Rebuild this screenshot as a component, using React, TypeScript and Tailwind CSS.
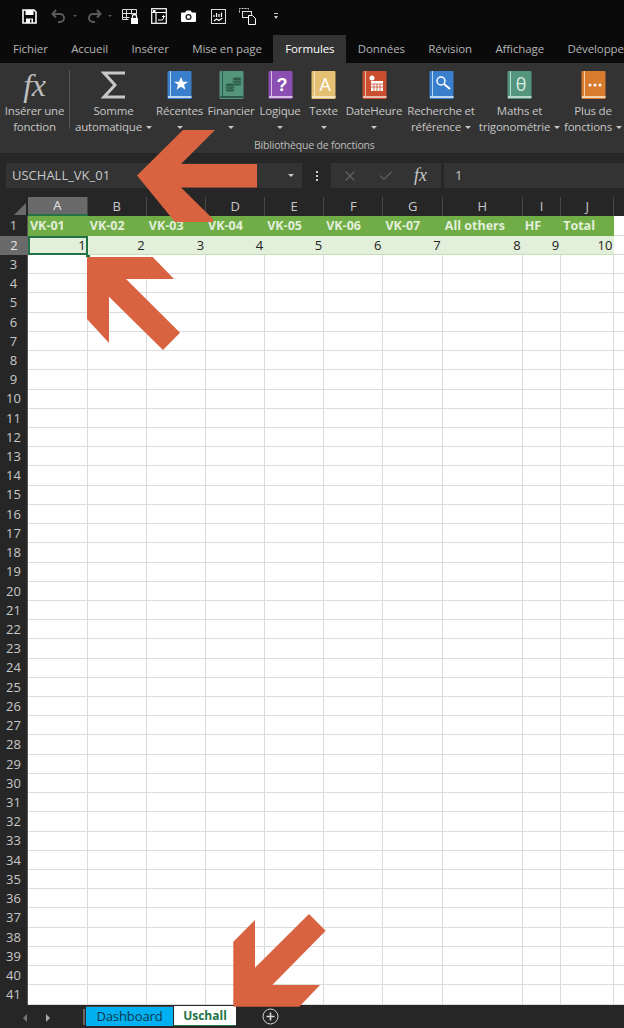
import { Check, X } from 'lucide-react'

const columns = [
    { name: 'A', width: 59.8 },
    { name: 'B', width: 59 },
    { name: 'C', width: 59.3 },
    { name: 'D', width: 59.1 },
    { name: 'E', width: 59 },
    { name: 'F', width: 59.3 },
    { name: 'G', width: 59.3 },
    { name: 'H', width: 80 },
    { name: 'I', width: 38.4 },
    { name: 'J', width: 53.3 },
    { name: '', width: 40 },
]

const headers = ['VK-01', 'VK-02', 'VK-03', 'VK-04', 'VK-05', 'VK-06', 'VK-07', 'All others', 'HF', 'Total']
const tabs = ['Fichier', 'Accueil', 'Insérer', 'Mise en page', 'Formules', 'Données', 'Révision', 'Affichage', 'Développeur']
const emptyRows = Array.from({ length: 39 }, (_, i) => i + 3)

function Caret() {
    return <span className="inline-block h-0 w-0 border-x-[3px] border-t-[3px] border-x-transparent border-t-[#c8c8c8] align-middle" />
}

function Book({ color, spine, children }: { color: string; spine: string; children: React.ReactNode }) {
    return (
        <svg width="25" height="28" viewBox="0 0 25 28">
            <rect x="0.5" y="0" width="24" height="28" rx="1" fill={color} />
            <rect x="3" y="0" width="1" height="25" fill={spine} />
            <rect x="1" y="25" width="23.5" height="2" fill={spine} />
            {children}
        </svg>
    )
}

function RibbonButton({ x, label, sub, children }: { x: string; label: string; sub?: string; children: React.ReactNode }) {
    return (
        <div className={`flex shrink-0 flex-col items-center ${x}`}>
            <div className="flex h-[28px] items-center justify-center">{children}</div>
            <div className="mt-[4px] whitespace-nowrap leading-[16px]">{label}</div>
            <div className="flex h-[16px] items-center gap-[4px] whitespace-nowrap leading-[16px]">
                {sub}
                <Caret />
            </div>
        </div>
    )
}

function Coins({ cx, cy }: { cx: number; cy: number }) {
    return (
        <g fill="#2e5c4b" stroke="#54957d" strokeWidth="0.6">
            <ellipse cx={cx} cy={cy + 5} rx="4.5" ry="2" />
            <ellipse cx={cx} cy={cy + 2.5} rx="4.5" ry="2" />
            <ellipse cx={cx} cy={cy} rx="4.5" ry="2" />
        </g>
    )
}

function QuickIcons() {
    return (
        <div className="flex h-[35px] items-center pb-[3px] text-white">
            <svg className="ml-[22px]" width="15" height="15" viewBox="0 0 15 15">
                <path d="M1 1h11l2 2v11H1z" fill="none" stroke="#fff" strokeWidth="1.6" />
                <rect x="3.5" y="1" width="8" height="5" fill="#fff" />
                <rect x="4" y="9.5" width="7" height="4.5" fill="#fff" />
                <rect x="8" y="10.5" width="1.5" height="3" fill="#111" />
            </svg>
            <svg className="ml-[14px]" width="16" height="14" viewBox="0 0 16 14" fill="none" stroke="#5a5a5a" strokeWidth="2">
                <path d="M5 1 1.5 5 5 8.5M2 5h7a4 4 0 0 1 0 8H7" />
            </svg>
            <span className="ml-[6px] h-0 w-0 border-x-[2px] border-t-[2px] border-x-transparent border-t-[#5a5a5a]" />
            <svg className="ml-[9px]" width="16" height="14" viewBox="0 0 16 14" fill="none" stroke="#5a5a5a" strokeWidth="2">
                <path d="M11 1l3.5 4L11 8.5M14 5H7a4 4 0 0 0 0 8h2" />
            </svg>
            <span className="ml-[6px] h-0 w-0 border-x-[2px] border-t-[2px] border-x-transparent border-t-[#5a5a5a]" />
            <svg className="ml-[10px]" width="17" height="17" viewBox="0 0 17 17" fill="none" stroke="#ddd">
                <path d="M.5 1.5h14M.5 5.5h14M.5 9.5h7M.5 1.5v10h6M4.5 1.500v10M9.500 1.500v5M14.500 1.500v5" />
                <rect x="9" y="10" width="7" height="6" fill="#fff" stroke="none" />
                <path d="M10.500 10V8.500a2 2 0 0 1 4 0V10" stroke="#fff" strokeWidth="1.3" />
            </svg>
            <svg className="ml-[12px]" width="16" height="16" viewBox="0 0 16 16" fill="none" stroke="#fff">
                <rect x=".7" y=".7" width="14.6" height="14.6" strokeWidth="1.2" />
                <path d="M.7 4.500h14.600M5 4.500v10.800" strokeWidth="1.2" />
                <path d="M7 12h3.500a2 2 0 0 0 2-2V8M11 9l1.500-1.500L14 9" />
                <rect x="2" y="2" width="2.5" height="2" fill="#fff" stroke="none" />
            </svg>
            <svg className="ml-[14px]" width="15" height="12" viewBox="0 0 15 12">
                <path d="M1 2.500h3L5.500.5h4L11 2.500h3a1 1 0 0 1 1 1V11a1 1 0 0 1-1 1H1a1 1 0 0 1-1-1V3.500a1 1 0 0 1 1-1z" fill="#fff" />
                <circle cx="7.5" cy="7" r="3" fill="#111" />
                <circle cx="7.5" cy="7" r="1.8" fill="#fff" />
            </svg>
            <svg className="ml-[15px]" width="15" height="15" viewBox="0 0 15 15" fill="none" stroke="#ddd">
                <rect x=".5" y=".5" width="14" height="14" />
                <path d="M3 6v2M5.500 4v4M8 5v3M10.500 3.500V8M3 12l2.500-2 2.500 1.500 3.500-2.500" stroke="#fff" strokeWidth="1.2" />
            </svg>
            <svg className="ml-[13px]" width="18" height="17" viewBox="0 0 18 17" fill="none" stroke="#ddd">
                <path d="M.5 4.500v-4h9v2" strokeDasharray="2 1" />
                <rect x="3.5" y="3.5" width="9" height="6" fill="#111" />
                <path d="M9.500 7.500h4l3 3v6h-7z" fill="#111" stroke="#fff" />
            </svg>
            <div className="ml-[17px] flex flex-col items-center gap-[2px]">
                <span className="h-px w-[4px] bg-[#ccc]" />
                <span className="h-0 w-0 border-x-[2.5px] border-t-[3px] border-x-transparent border-t-[#ccc]" />
            </div>
        </div>
    )
}

function Ribbon() {
    return (
        <div className="relative h-[90px] overflow-hidden bg-[#333333] pt-[8px] text-[11.5px] tracking-[-0.2px] text-[#c6c6c6]">
            <div className="flex items-start">
                <div className="flex w-[69px] shrink-0 flex-col items-center">
                    <div className="flex h-[28px] items-center font-['Liberation_Serif',serif] text-[32px] italic leading-none text-[#bdbdbd]">fx</div>
                    <div className="mt-[4px] whitespace-nowrap text-center leading-[16px]">
                        Insérer une
                        <br />
                        fonction
                    </div>
                </div>
                <div className="mt-[-1px] h-[59px] w-px shrink-0 bg-[#555555]" />
                <RibbonButton x="ml-[5px] w-[77px]" label="Somme" sub="automatique">
                    <svg width="25" height="28" viewBox="0 0 25 28" fill="none" stroke="#c8c8c8" strokeWidth="3">
                        <path d="M24 2H3l11 12L3 26h21" />
                    </svg>
                </RibbonButton>
                <RibbonButton x="ml-[2.5px] w-[50px]" label="Récentes">
                    <Book color="#3a7fcc" spine="#bcd6ef">
                        <path d="M14 6l2 4.700h5l-4 3.100 1.500 5-4.500-3-4.500 3 1.500-5-4-3.100h5z" fill="#fff" />
                    </Book>
                </RibbonButton>
                <RibbonButton x="ml-[2px] w-[49px]" label="Financier">
                    <Book color="#54957d" spine="#2e5c4b">
                        <Coins cx={18} cy={8} />
                        <Coins cx={11} cy={14} />
                    </Book>
                </RibbonButton>
                <RibbonButton x="ml-[2.5px] w-[44px]" label="Logique">
                    <Book color="#8a4fb0" spine="#d6c0e4">
                        <text x="14" y="20" textAnchor="middle" fontSize="18" fontWeight="700" fill="#fff" fontFamily="Liberation Sans, sans-serif">?</text>
                    </Book>
                </RibbonButton>
                <RibbonButton x="ml-[3px] w-[37px]" label="Texte">
                    <Book color="#e5bf72" spine="#f3e2bd">
                        <text x="14" y="20" textAnchor="middle" fontSize="18" fill="#fff" fontFamily="Open Sans, sans-serif">A</text>
                    </Book>
                </RibbonButton>
                <RibbonButton x="ml-[3px] w-[58px]" label="DateHeure">
                    <Book color="#c94f30" spine="#eabcae">
                        <rect x="9" y="10" width="12" height="10" fill="#fff" />
                        <path d="M9 13h12M9 16h12M12 13v7M15 13v7M18 13v7" stroke="#c94f30" strokeWidth=".8" />
                        <circle cx="10" cy="7" r="2.5" fill="#fff" />
                    </Book>
                </RibbonButton>
                <RibbonButton x="ml-[4px] w-[68px]" label="Recherche et" sub="référence">
                    <Book color="#3a7fcc" spine="#bcd6ef">
                        <circle cx="12" cy="10" r="4" fill="none" stroke="#fff" strokeWidth="1.5" />
                        <path d="M15 13l6 5" stroke="#fff" strokeWidth="2" />
                    </Book>
                </RibbonButton>
                <RibbonButton x="ml-[6.5px] w-[76px]" label="Maths et" sub="trigonométrie">
                    <Book color="#54957d" spine="#b8d6ca">
                        <text x="14" y="20" textAnchor="middle" fontSize="18" fill="#d8ebe3" fontFamily="Open Sans, sans-serif">θ</text>
                    </Book>
                </RibbonButton>
                <RibbonButton x="ml-[5.5px] w-[60px]" label="Plus de" sub="fonctions">
                    <Book color="#d97b2e" spine="#f2cfae">
                        <circle cx="9" cy="14" r="1.5" fill="#fff" />
                        <circle cx="14" cy="14" r="1.5" fill="#fff" />
                        <circle cx="19" cy="14" r="1.5" fill="#fff" />
                    </Book>
                </RibbonButton>
            </div>
            <div className="absolute left-[254px] top-[75px] text-[10.5px] leading-[14px] text-[#bdbdbd]">Bibliothèque de fonctions</div>
        </div>
    )
}

function FormulaBar() {
    return (
        <div className="flex h-[44px] items-start bg-[#262626] pt-[10px]">
            <div className="ml-[6px] flex h-[25px] w-[296px] items-center justify-between bg-[#333333] pl-[6px] pr-[8px] text-[13px] text-[#c8c8c8]">
                USCHALL_VK_01
                <Caret />
            </div>
            <div className="flex h-[25px] w-[29px] flex-col items-center justify-center gap-[2px]">
                <span className="h-[2px] w-[2px] bg-[#ccc]" />
                <span className="h-[2px] w-[2px] bg-[#ccc]" />
                <span className="h-[2px] w-[2px] bg-[#ccc]" />
            </div>
            <div className="flex h-[25px] w-[110px] items-center bg-[#333333] pl-[11px] text-[#5e5e5e]">
                <X size={16} />
                <Check size={16} className="ml-[20px]" />
                <span className="ml-[20px] font-['Liberation_Serif',serif] text-[18px] italic text-[#c8c8c8]">fx</span>
            </div>
            <div className="ml-[3px] flex h-[25px] flex-1 items-center bg-[#333333] pl-[11px] text-[13px] text-[#c8c8c8]">1</div>
        </div>
    )
}

function Sheet() {
    return (
        <div className="flex flex-col text-[#c8c8c8]">
            <div className="flex h-[19px] bg-[#262626]">
                <div className="relative w-[28px] shrink-0">
                    <span className="absolute bottom-[1px] right-[2px] h-0 w-0 border-b-[12px] border-l-[12px] border-b-[#6a6a6a] border-l-transparent" />
                </div>
                {columns.map((col, i) => (
                    <div
                        key={col.name}
                        style={{ width: col.width }}
                        className={`flex shrink-0 items-center justify-center border-r border-[#474747] text-[13px] ${i === 0 ? 'border-b-2 border-b-[#217346] bg-[#6a6a6a] text-[#e6e6e6]' : ''}`}
                    >
                        {col.name}
                    </div>
                ))}
            </div>
            <div className="flex h-[19.5px]">
                <div className="flex w-[28px] shrink-0 items-center justify-center border-r border-[#555] bg-[#262626] text-[13px]">1</div>
                {headers.map((h, i) => (
                    <div
                        key={h}
                        style={{ width: columns[i].width }}
                        className="shrink-0 whitespace-nowrap bg-[#70ad47] pl-[2px] text-[12.5px] font-bold leading-[20px] text-[#e2efda]"
                    >
                        {h}
                    </div>
                ))}
                <div className="flex-1 border-b border-[#d9d9d9] bg-white" />
            </div>
            <div className="flex h-[19.5px]">
                <div className="flex w-[28px] shrink-0 items-center justify-center bg-[#6a6a6a] text-[13px] text-[#e6e6e6]">2</div>
                {headers.map((h, i) => (
                    <div
                        key={h}
                        style={{ width: columns[i].width }}
                        className={`relative shrink-0 bg-[#e2efda] pr-[2px] text-right text-[13px] leading-[19px] text-[#222] ${i === 0 ? 'outline-2 -outline-offset-2 outline-[#217346]' : 'border-b border-[#c6dfb8]'}`}
                    >
                        {i + 1}
                        {i === 0 && <span className="absolute -bottom-[2px] -right-[2px] h-[4px] w-[4px] bg-[#217346]" />}
                    </div>
                ))}
                <div className="flex-1 border-b border-[#d9d9d9] bg-white" />
            </div>
            {emptyRows.map((row) => (
                <div key={row} className="flex h-[19.22px]">
                    <div className="flex w-[28px] shrink-0 items-center justify-center border-r border-[#555] bg-[#262626] text-[13px]">{row}</div>
                    {columns.map((col) => (
                        <div key={col.name} style={{ width: col.width }} className="shrink-0 border-b border-r border-[#dcdcdc] bg-white" />
                    ))}
                </div>
            ))}
        </div>
    )
}

function SheetTabs() {
    return (
        <div className="flex h-[22px] items-start bg-[#262626]">
            <span className="ml-[23px] mt-[8px] h-0 w-0 border-y-[4px] border-r-[4px] border-y-transparent border-r-[#777]" />
            <span className="ml-[19px] mt-[8px] h-0 w-0 border-y-[4px] border-l-[4px] border-y-transparent border-l-[#aaa]" />
            <span className="ml-[33px] mt-[3px] h-[16px] w-[2px] bg-[#666]" />
            <div className="ml-[1px] flex h-[20px] w-[87px] items-center justify-center border-t border-[#444] bg-[#00b0f0] text-[13px] tracking-[-0.1px] text-[#10364a]">Dashboard</div>
            <div className="ml-[1px] flex h-[20px] w-[62px] items-center justify-center border-b border-[#217346] bg-white text-[12px] font-bold text-[#217346]">Uschall</div>
            <svg className="ml-[26px] mt-[2px]" width="17" height="17" viewBox="0 0 17 17" fill="none" stroke="#d8d8d8">
                <circle cx="8.5" cy="8.5" r="7.5" />
                <path d="M8.500 4.500v8M4.500 8.500h8" strokeWidth="1.6" />
            </svg>
        </div>
    )
}

export default function App() {
    return (
        <div className="relative h-[1028px] w-[624px] overflow-hidden bg-[#262626] font-['Open_Sans',sans-serif]">
            <div className="bg-[#0a0a0a]">
                <QuickIcons />
                <div className="flex h-[28px] items-stretch pl-[1.3px] text-[11.5px] tracking-[-0.1px] text-[#b4b4b4]">
                    {tabs.map((tab, i) => (
                        <div
                            key={tab}
                            className={`flex shrink-0 items-center whitespace-nowrap px-[11.7px] ${i === 4 ? 'bg-[#333333] text-white' : ''}`}
                        >
                            {tab}
                        </div>
                    ))}
                </div>
            </div>
            <Ribbon />
            <FormulaBar />
            <Sheet />
            <div className="absolute bottom-0 left-0 right-0">
                <SheetTabs />
            </div>

            {/* annotation arrows */}
            <svg className="absolute left-0 top-0" width="624" height="1028" viewBox="0 0 624 1028" fill="#d96241">
                <polygon points="137,175.5 183,130 215,130 181,164 257,164 257,187.5 181,187.5 213,219 213,222 175,222" />
                <polygon points="87,257 152.7,257 174,279 126,279 180,332.7 163,350 109,296.7 109,343 87,319" />
                <polygon points="255,920 255,967.7 309,914 325.7,930.7 272.3,985 320,985 299.3,1006.7 233.3,1006.7 233.3,941.7" />
            </svg>
        </div>
    )
}
